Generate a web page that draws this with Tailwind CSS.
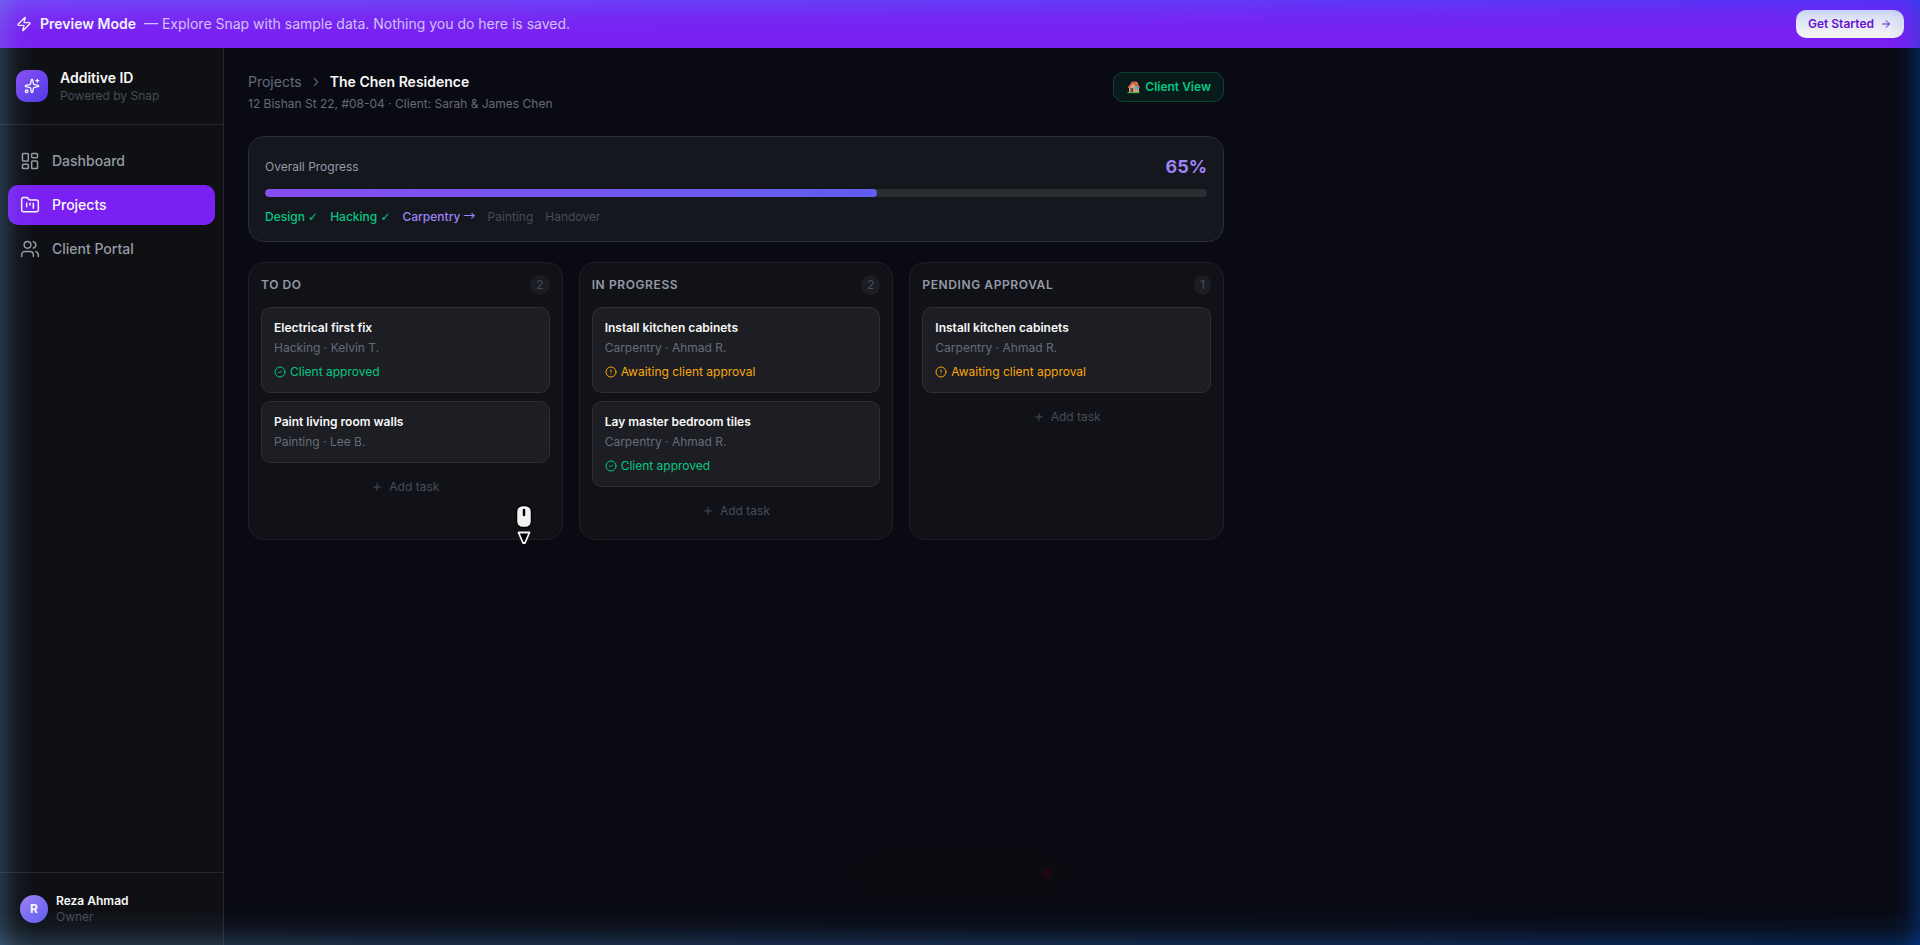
<!DOCTYPE html>
<html lang="en">
<head>
    <meta charset="utf-8">
    <meta name="viewport" content="width=device-width, initial-scale=1">
    <title>Snap - The Chen Residence</title>
    <script src="https://cdn.jsdelivr.net/npm/@tailwindcss/browser@4"></script>
</head>
<body class="min-h-screen flex flex-col bg-[#090a12] font-['Inter',sans-serif] text-[#f8f8f8]">

<!-- shared icons -->
<svg class="hidden" aria-hidden="true">
    <symbol id="check-circle" viewBox="0 0 24 24"><circle cx="12" cy="12" r="10"/><path d="m9 12 2 2 4-4"/></symbol>
    <symbol id="alert-circle" viewBox="0 0 24 24"><circle cx="12" cy="12" r="10"/><path d="M12 8v4M12 16h.01"/></symbol>
    <symbol id="plus" viewBox="0 0 24 24"><path d="M5 12h14M12 5v14"/></symbol>
</svg>

<!-- Preview banner -->
<div class="h-12 flex items-center justify-between px-4 bg-[#7a20f2]">
    <div class="flex items-center gap-2 text-sm">
        <svg class="size-4" viewBox="0 0 24 24" fill="none" stroke="currentColor" stroke-width="2" stroke-linecap="round" stroke-linejoin="round"><path d="M4 14a1 1 0 0 1-.78-1.63l9.9-10.2a.5.5 0 0 1 .86.46l-1.92 6.02A1 1 0 0 0 13 10h7a1 1 0 0 1 .78 1.63l-9.9 10.2a.5.5 0 0 1-.86-.46l1.92-6.02A1 1 0 0 0 11 14z"/></svg>
        <span class="font-semibold">Preview Mode</span>
        <span class="text-[#d9c4f8]">— Explore Snap with sample data. Nothing you do here is saved.</span>
    </div>
    <button class="flex items-center gap-1.5 rounded-[10px] bg-[#f4f4f4] px-3 py-1.5 text-xs font-semibold text-[#6d0fd4]">
        Get Started
        <svg class="size-3" viewBox="0 0 24 24" fill="none" stroke="currentColor" stroke-width="2" stroke-linecap="round" stroke-linejoin="round"><path d="M5 12h14M12 5l7 7-7 7"/></svg>
    </button>
</div>

<div class="flex grow">
    <!-- Sidebar -->
    <aside class="w-56 shrink-0 flex flex-col border-r border-[#26272b] bg-[#0f1014]">
        <div class="flex items-center gap-3 px-4 py-5 border-b border-[#26272b]">
            <div class="size-8 rounded-[10px] flex items-center justify-center bg-linear-to-br from-[#8a4df3] to-[#4f3be8]">
                <svg class="size-4" viewBox="0 0 24 24" fill="none" stroke="currentColor" stroke-width="2" stroke-linecap="round" stroke-linejoin="round"><path d="M11.017 2.814a1 1 0 0 1 1.966 0l1.051 5.558a2 2 0 0 0 1.594 1.594l5.558 1.051a1 1 0 0 1 0 1.966l-5.558 1.051a2 2 0 0 0-1.594 1.594l-1.051 5.558a1 1 0 0 1-1.966 0l-1.051-5.558a2 2 0 0 0-1.594-1.594l-5.558-1.051a1 1 0 0 1 0-1.966l5.558-1.051a2 2 0 0 0 1.594-1.594z"/><path d="M20 2v4M22 4h-4"/><circle cx="4" cy="20" r="2"/></svg>
            </div>
            <div>
                <p class="text-sm font-semibold">Additive ID</p>
                <p class="text-xs text-[#464c59]">Powered by Snap</p>
            </div>
        </div>

        <nav class="grow px-2 py-4 space-y-1 text-sm font-medium text-[#949aa5]">
            <a href="#" class="flex items-center gap-3 rounded-[10px] px-3 py-2.5">
                <svg class="size-5" viewBox="0 0 24 24" fill="none" stroke="currentColor" stroke-width="1.8" stroke-linecap="round" stroke-linejoin="round"><rect width="7" height="9" x="3" y="3" rx="1"/><rect width="7" height="5" x="14" y="3" rx="1"/><rect width="7" height="9" x="14" y="12" rx="1"/><rect width="7" height="5" x="3" y="16" rx="1"/></svg>
                Dashboard
            </a>
            <a href="#" class="flex items-center gap-3 rounded-[10px] px-3 py-2.5 bg-[#7a20f2] text-[#f8f8f8]">
                <svg class="size-5" viewBox="0 0 24 24" fill="none" stroke="currentColor" stroke-width="1.8" stroke-linecap="round" stroke-linejoin="round"><path d="M4 20h16a2 2 0 0 0 2-2V8a2 2 0 0 0-2-2h-7.93a2 2 0 0 1-1.66-.9l-.82-1.2A2 2 0 0 0 7.93 3H4a2 2 0 0 0-2 2v13c0 1.1.9 2 2 2Z"/><path d="M8 10v4M12 10v2M16 10v6"/></svg>
                Projects
            </a>
            <a href="#" class="flex items-center gap-3 rounded-[10px] px-3 py-2.5">
                <svg class="size-5" viewBox="0 0 24 24" fill="none" stroke="currentColor" stroke-width="1.8" stroke-linecap="round" stroke-linejoin="round"><path d="M16 21v-2a4 4 0 0 0-4-4H6a4 4 0 0 0-4 4v2"/><circle cx="9" cy="7" r="4"/><path d="M22 21v-2a4 4 0 0 0-3-3.87M16 3.130a4 4 0 0 1 0 7.750"/></svg>
                Client Portal
            </a>
        </nav>

        <div class="flex items-center gap-2 p-5 border-t border-[#26272b] text-xs">
            <div class="size-7 rounded-full flex items-center justify-center font-bold bg-linear-to-br from-[#a080f5] to-[#5e5cf0]">R</div>
            <div>
                <p class="font-semibold">Reza Ahmad</p>
                <p class="text-[#464c59]">Owner</p>
            </div>
        </div>
    </aside>

    <!-- Project page -->
    <main class="grow max-w-5xl p-6">
        <div class="flex items-start justify-between mb-6">
            <div>
                <div class="flex items-center gap-2 text-sm">
                    <a href="#" class="text-[#656b79]">Projects</a>
                    <svg class="size-3.5 -mx-px text-[#5a606d]" viewBox="0 0 24 24" fill="none" stroke="currentColor" stroke-width="2" stroke-linecap="round" stroke-linejoin="round"><path d="m9 18 6-6-6-6"/></svg>
                    <h1 class="font-semibold">The Chen Residence</h1>
                </div>
                <p class="mt-1 text-xs text-[#656b79]">12 Bishan St 22, #08-04 · Client: Sarah &amp; James Chen</p>
            </div>
            <button class="flex items-center gap-1 rounded-[10px] border border-[#0b4436] bg-[#091a1b] px-3 py-1.5 text-xs font-semibold text-[#04c882]">
                <svg class="w-[15px] h-4" viewBox="0 0 15 16"><path d="M10 3h2v4h-2z" fill="#a9472f"/><path d="M3 8l3.500-4.500L13 8v5.500H3z" fill="#d6a078"/><path d="M6.500 3.500 10 2.500 14 8.500l-1.500.5z" fill="#e08a5c"/><path d="M1.500 8.500 6 2.500h2.500l4.500 6-1 .8-5-5.300-4 5z" fill="#cf5a38"/><path d="M4.500 9h2.700v4.500H4.500z" fill="#74493a"/><path d="M9 7.500h3v3.200H9z" fill="#4aa8e8"/><path d="M1.500 13h12v1.200h-12z" fill="#3fae5a"/></svg>
                Client View
            </button>
        </div>

        <section class="rounded-2xl border border-[#2b2d32] bg-[#14171e] p-4 mb-5">
            <div class="flex items-center justify-between">
                <span class="text-xs text-[#949aa5]">Overall Progress</span>
                <span class="text-lg font-bold text-[#9f83f6]">65%</span>
            </div>
            <div class="mt-2 h-2 rounded-full bg-[#2c2d31] overflow-hidden">
                <div class="h-full rounded-full bg-linear-to-r from-[#874df0] to-[#5f5df2]" style="width: 65%"></div>
            </div>
            <div class="mt-3 h-4 flex gap-3 text-xs text-[#464c59]">
                <span class="font-medium text-[#04c882]">Design <span class="font-['DejaVu_Sans',sans-serif] leading-none">✓</span></span>
                <span class="font-medium text-[#04c882]">Hacking <span class="font-['DejaVu_Sans',sans-serif] leading-none">✓</span></span>
                <span class="font-medium text-[#9f83f6]">Carpentry <span class="font-['Noto_Sans_CJK_JP',sans-serif] leading-none">→</span></span>
                <span>Painting</span>
                <span>Handover</span>
            </div>
        </section>

        <!-- Board -->
        <div class="grid grid-cols-3 gap-4 text-xs">
            <section class="rounded-2xl border border-[#202125] bg-[#111217] p-3">
                <div class="flex items-center justify-between mb-3">
                    <h2 class="font-semibold uppercase tracking-wider text-[#949aa5]">To Do</h2>
                    <span class="rounded-full bg-[#1c1d22] px-1.5 py-0.5 text-[#464c59]">2</span>
                </div>
                <div class="space-y-2">
                    <article class="rounded-[10px] border border-[#2f3035] bg-[#1d1e23] p-3">
                        <h3 class="font-semibold">Electrical first fix</h3>
                        <p class="mt-1 text-[#656b79]">Hacking · Kelvin T.</p>
                        <p class="mt-2 flex items-center gap-1 text-[#04c882]"><svg class="size-3" fill="none" stroke="currentColor" stroke-width="2" stroke-linecap="round" stroke-linejoin="round"><use href="#check-circle"/></svg>Client approved</p>
                    </article>
                    <article class="rounded-[10px] border border-[#2f3035] bg-[#1d1e23] p-3">
                        <h3 class="font-semibold">Paint living room walls</h3>
                        <p class="mt-1 text-[#656b79]">Painting · Lee B.</p>
                    </article>
                    <button class="w-full flex items-center justify-center gap-1.5 py-2 text-[#464c59]"><svg class="size-3" fill="none" stroke="currentColor" stroke-width="2" stroke-linecap="round"><use href="#plus"/></svg>Add task</button>
                </div>
            </section>

            <section class="rounded-2xl border border-[#202125] bg-[#111217] p-3">
                <div class="flex items-center justify-between mb-3">
                    <h2 class="font-semibold uppercase tracking-wider text-[#949aa5]">In Progress</h2>
                    <span class="rounded-full bg-[#1c1d22] px-1.5 py-0.5 text-[#464c59]">2</span>
                </div>
                <div class="space-y-2">
                    <article class="rounded-[10px] border border-[#2f3035] bg-[#1d1e23] p-3">
                        <h3 class="font-semibold">Install kitchen cabinets</h3>
                        <p class="mt-1 text-[#656b79]">Carpentry · Ahmad R.</p>
                        <p class="mt-2 flex items-center gap-1 text-[#f9a60a]"><svg class="size-3" fill="none" stroke="currentColor" stroke-width="2" stroke-linecap="round" stroke-linejoin="round"><use href="#alert-circle"/></svg>Awaiting client approval</p>
                    </article>
                    <article class="rounded-[10px] border border-[#2f3035] bg-[#1d1e23] p-3">
                        <h3 class="font-semibold">Lay master bedroom tiles</h3>
                        <p class="mt-1 text-[#656b79]">Carpentry · Ahmad R.</p>
                        <p class="mt-2 flex items-center gap-1 text-[#04c882]"><svg class="size-3" fill="none" stroke="currentColor" stroke-width="2" stroke-linecap="round" stroke-linejoin="round"><use href="#check-circle"/></svg>Client approved</p>
                    </article>
                    <button class="w-full flex items-center justify-center gap-1.5 py-2 text-[#464c59]"><svg class="size-3" fill="none" stroke="currentColor" stroke-width="2" stroke-linecap="round"><use href="#plus"/></svg>Add task</button>
                </div>
            </section>

            <section class="rounded-2xl border border-[#202125] bg-[#111217] p-3">
                <div class="flex items-center justify-between mb-3">
                    <h2 class="font-semibold uppercase tracking-wider text-[#949aa5]">Pending Approval</h2>
                    <span class="rounded-full bg-[#1c1d22] px-1.5 py-0.5 text-[#464c59]">1</span>
                </div>
                <div class="space-y-2">
                    <article class="rounded-[10px] border border-[#2f3035] bg-[#1d1e23] p-3">
                        <h3 class="font-semibold">Install kitchen cabinets</h3>
                        <p class="mt-1 text-[#656b79]">Carpentry · Ahmad R.</p>
                        <p class="mt-2 flex items-center gap-1 text-[#f9a60a]"><svg class="size-3" fill="none" stroke="currentColor" stroke-width="2" stroke-linecap="round" stroke-linejoin="round"><use href="#alert-circle"/></svg>Awaiting client approval</p>
                    </article>
                    <button class="w-full flex items-center justify-center gap-1.5 py-2 text-[#464c59]"><svg class="size-3" fill="none" stroke="currentColor" stroke-width="2" stroke-linecap="round"><use href="#plus"/></svg>Add task</button>
                </div>
            </section>
        </div>
    </main>
</div>

<!-- Scroll cursor -->
<svg class="absolute left-[514px] top-[503px] w-5 h-[42px] pointer-events-none" viewBox="0 0 20 42"><rect x="2.500" y="2.500" width="15" height="22" rx="6" fill="#f2f2f2" stroke="#000" stroke-width="1.500"/><path d="M10 7v5" stroke="#000" stroke-width="2.500" stroke-linecap="round"/><path d="M4.500 29.500h11L11 40H9z" fill="#000" stroke="#f2f2f2" stroke-width="1.800" stroke-linejoin="round"/></svg>

<!-- Fading toast -->
<div class="fixed bottom-[52px] left-1/2 -translate-x-1/2 w-[208px] h-10 rounded-full bg-[#0b0c10] flex items-center justify-end pr-3 pointer-events-none">
    <span class="size-2.5 rounded-xs bg-[#1c0712]"></span>
</div>

<!-- Window edge glow -->
<div class="fixed inset-0 pointer-events-none">
    <div class="absolute inset-y-0 left-0 w-9 bg-linear-to-r from-[#6aa5dc]/26 via-[#6aa5dc]/6 to-transparent"></div>
    <div class="absolute inset-y-0 right-0 w-8 bg-linear-to-l from-[#0050c0]/34 via-[#0050c0]/7 to-transparent"></div>
    <div class="absolute inset-x-0 top-0 h-9 mask-[linear-gradient(to_bottom,#000,rgb(0_0_0/0.3)_50%,transparent)] bg-linear-to-r from-[#6aa5ff]/28 to-[#1050ff]/34"></div>
    <div class="absolute inset-x-0 bottom-0 h-9 mask-[linear-gradient(to_top,#000,rgb(0_0_0/0.25)_50%,transparent)] bg-linear-to-r from-[#6aa5dc]/24 to-[#0050c0]/34"></div>
</div>

</body>
</html>
